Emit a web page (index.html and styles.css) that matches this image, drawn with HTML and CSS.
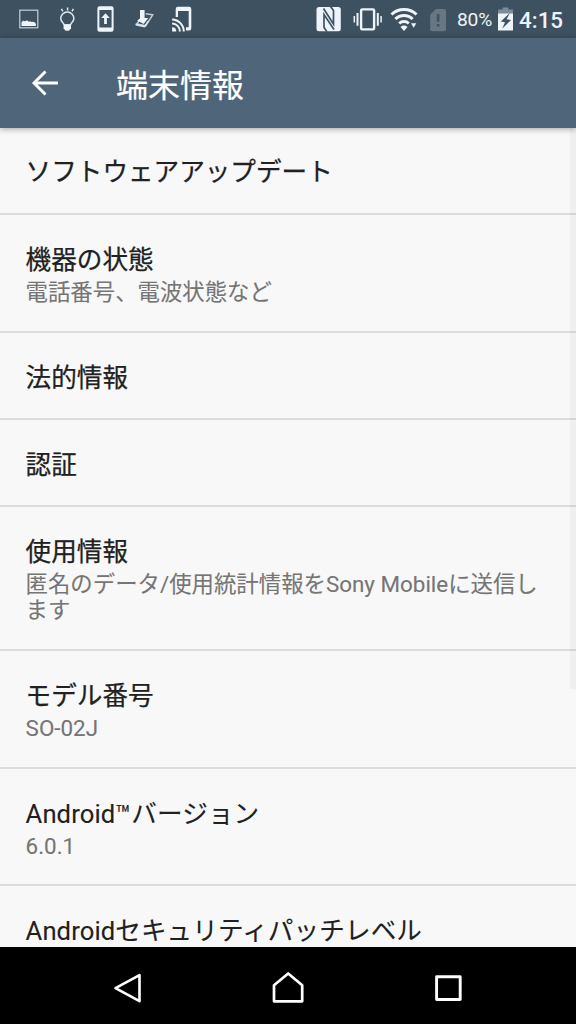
FILE: index.html
```html
<!DOCTYPE html>
<html lang="ja">
<head>
<meta charset="utf-8">
<title>端末情報</title>
<link rel="stylesheet" href="styles.css">
</head>
<body>
<div class="screen">
  <header class="status">
    <div class="notifications">
      <svg class="note" viewBox="0 0 38 38"><rect x="9.6" y="10.2" width="18" height="17.6" fill="none" stroke="#c5d0d8" stroke-width="1.2"/><path d="M11.300 26v-3.500c1-2.500 3-2 3.500-1 1-1.500 2.700-1.500 3.500.3 1-.8 2-.8 2.800.2 2-.5 4 .3 4.600 2V26z" fill="#edf4fa"/></svg>
      <svg class="note" viewBox="0 0 38 38"><path d="M15.800 24.800c0-2-3.300-3-3.300-6.200a6.600 6.600 0 0 1 13.200 0c0 3.200-3.300 4.200-3.300 6.200z" fill="none" stroke="#dce7ef" stroke-width="1.5"/><path d="M15.400 25h7.400v3.200l-2 2.500h-3.400l-2-2.500z" fill="#edf4fa"/><path d="M19.400 7.600v3M13.200 8.800l1.400 2.600M25.200 8.800l-1.400 2.600" stroke="#dce7ef" stroke-width="1.5"/></svg>
      <svg class="note" viewBox="0 0 38 38"><rect x="11.200" y="6.200" width="16.200" height="25.600" rx="2.200" fill="#edf4fa"/><path d="M13.200 10h12.200v17.500H13.200z" fill="#405363"/><path d="M19.300 13.200l4.300 4.800h-2.900v6h-2.800v-6H15z" fill="#edf4fa"/></svg>
      <svg class="note" viewBox="0 0 38 38"><path d="M20.500 13.800l7 1-7 11-9-1.800 4-5" fill="none" stroke="#c5d0d8" stroke-width="1.500"/><path d="M14.800 10h4.600v8h3.600l-4.500 6-6.500-3.500 2.800-2z" fill="#edf4fa"/><path d="M10.300 23.500l9 1.800 4-5.500v2.500L19.500 27.500l-9-2z" fill="#dce7ef"/></svg>
      <svg class="note" viewBox="0 0 38 38"><path d="M12.500 17V9a2.200 2.200 0 0 1 2.200-2.200h11.200A2.200 2.200 0 0 1 28.100 9v19.200a2.200 2.200 0 0 1-2.200 2.200H22.800v-3.200h2.700V11H14.800v6z" fill="#edf4fa"/><path d="M8.900 19.500a12 12 0 0 1 11.700 12M8.900 23.400a8 8 0 0 1 7.800 8.100" fill="none" stroke="#edf4fa" stroke-width="2"/><path d="M8.900 27.200a4.300 4.300 0 0 1 4.200 4.300H8.900z" fill="#edf4fa"/></svg>
    </div>
    <div class="system">
      <svg class="nfc" viewBox="0 0 26 38"><rect x=".5" y="7" width="24.300" height="24.200" rx="2.500" fill="#edf4fa"/><path d="M10.800 31.500L8 27.500V14.500l10 15M14.500 6.500l3 4v13.500L7.500 8.500" fill="none" stroke="#405363" stroke-width="1.700"/></svg>
      <svg class="vibrate" viewBox="0 0 30 38"><rect x="8.100" y="9.400" width="13" height="20" rx="1.200" fill="none" stroke="#edf4fa" stroke-width="2.400"/><path d="M4.500 13v12.800M24.800 13v12.800" stroke="#edf4fa" stroke-width="2"/><path d="M1.300 16v6.500M28.100 16v6.500" stroke="#edf4fa" stroke-width="1.500"/></svg>
      <svg class="wifi" viewBox="0 0 28 38"><path d="M1.500 14.500a18 18 0 0 1 25 0M5.300 19a12.500 12.500 0 0 1 17.400 0M9.200 23.500a7 7 0 0 1 9.600 0" fill="none" stroke="#edf4fa" stroke-width="3"/><path d="M10.500 27a5 5 0 0 1 7 0L14 31z" fill="#edf4fa"/><path d="M21 23.300h5.300l-2.600 4.500z" fill="#edf4fa"/></svg>
      <svg class="sim" viewBox="0 0 17 38"><path d="M6 9h8a2 2 0 0 1 2 2v18.200a2 2 0 0 1-2 2H2.200a2 2 0 0 1-2-2V14.500z" fill="#687782"/><path d="M6.800 14h2.600v7.800H6.800zM6.800 24h2.600v2.600H6.800z" fill="#405160"/></svg>
      <span class="percent">80%</span>
      <svg class="battery" viewBox="0 0 16 38"><path d="M0 14V9.500h4.600V7.600h5.800v1.900H15V14z" fill="#7e8c97"/><path d="M0 13.500h15v17H0z" fill="#edf4fa"/><path d="M12 12.800L2.800 21.600l4.200.7-2.800 6.500 8.800-8.900-4.400-.6z" fill="#405160"/></svg>
      <span class="clock">4:15</span>
    </div>
  </header>
  <div class="toolbar">
    <svg class="back" viewBox="0 0 28 28"><path d="M27 14H3M14.500 2.500L3 14l11.500 11.500" fill="none" stroke="#fff" stroke-width="2.900"/></svg>
    <h1 class="heading">端末情報</h1>
  </div>
  <main class="list">
    <section class="row first"><h2 class="title">ソフトウェアアップデート</h2></section>
    <section class="row double"><h2 class="title">機器の状態</h2><p class="summary">電話番号、電波状態など</p></section>
    <section class="row"><h2 class="title">法的情報</h2></section>
    <section class="row"><h2 class="title">認証</h2></section>
    <section class="row triple"><h2 class="title">使用情報</h2><p class="summary">匿名のデータ/使用統計情報をSony Mobileに送信し<br>ます</p></section>
    <section class="row double"><h2 class="title">モデル番号</h2><p class="summary">SO-02J</p></section>
    <section class="row double"><h2 class="title mixed">Android™バージョン</h2><p class="summary">6.0.1</p></section>
    <section class="row"><h2 class="title mixed">Androidセキュリティパッチレベル</h2></section>
    <div class="scrollbar"></div>
  </main>
  <nav class="nav">
    <svg class="key" viewBox="0 0 40 40"><path d="M31.500 7.200v26L7.500 20.200z" fill="none" stroke="#fff" stroke-width="2.600" stroke-linejoin="round"/></svg>
    <svg class="key" viewBox="0 0 40 40"><path d="M6 33.300V17.300L20.200 5.500l14 11.800v16z" fill="none" stroke="#fff" stroke-width="2.700" stroke-linejoin="round"/></svg>
    <svg class="key" viewBox="0 0 40 40"><rect x="8.600" y="8.700" width="23.600" height="22.800" fill="none" stroke="#fff" stroke-width="2.900" stroke-linejoin="round"/></svg>
  </nav>
</div>
</body>
</html>
```
FILE: styles.css
```css
* { box-sizing: border-box; }
body {
  margin: 0;
  font-family: Roboto, "Noto Sans CJK JP", sans-serif;
}
.screen {
  width: 576px;
  height: 1024px;
  display: flex;
  flex-direction: column;
  overflow: hidden;
  background: #f8f8f8;
}
.status {
  flex: 0 0 38px;
  display: flex;
  justify-content: space-between;
  padding: 0 13px 0 9.6px;
  background: #3e5160;
  color: #edf4fa;
}
.notifications, .system { display: flex; align-items: center; height: 38px; }
.note { width: 38.4px; height: 38px; }
.system svg { height: 38px; flex: none; }
.nfc { width: 26px; margin-right: 11px; }
.vibrate { width: 30px; margin-right: 7px; }
.wifi { width: 28px; margin-right: 12px; }
.sim { width: 17px; margin-right: 10px; }
.percent {
  width: 37px;
  padding-top: 2px;
  font-size: 19.2px;
  line-height: 36px;
  letter-spacing: -.2px;
  white-space: nowrap;
}
.battery { width: 16px; margin: 0 5px 0 4px; }
.clock {
  width: 44px;
  padding-top: 2px;
  font-size: 22.4px;
  font-weight: 500;
  line-height: 36px;
  white-space: nowrap;
}
.toolbar {
  flex: 0 0 90px;
  display: flex;
  align-items: center;
  padding-left: 31px;
  background: #4e657a;
  box-shadow: 0 1px 6px rgba(0, 0, 0, .35);
  z-index: 1;
}
.back { width: 28px; height: 28px; }
.heading {
  margin: 0 0 0 57px;
  padding-top: 5px;
  color: #fff;
  font-size: 32px;
  font-weight: 400;
  line-height: 44px;
  -webkit-text-stroke: .2px;
}
.list {
  position: relative;
  flex: 0 0 819px;
  overflow: hidden;
}
.row {
  height: 87.2px;
  padding: 28.8px 25.6px 0;
  border-bottom: 2px solid #dcdcdc;
}
.first { height: 87.2px; padding-top: 28.4px; }
.double { height: 117.6px; }
.triple { height: 144px; }
.title {
  margin: 0;
  color: #212121;
  font-size: 25.6px;
  font-weight: 400;
  line-height: 33px;
  white-space: nowrap;
  -webkit-text-stroke: .25px;
}
.mixed { letter-spacing: .1px; -webkit-text-stroke: .1px; }
.summary {
  margin: 2px 0 0;
  color: #757575;
  font-size: 22.4px;
  line-height: 26.4px;
  white-space: nowrap;
  -webkit-text-stroke: .1px;
}
.scrollbar {
  position: absolute;
  top: 0;
  right: 0;
  width: 6.4px;
  height: 561px;
  background: rgba(0, 0, 0, .035);
}
.nav {
  flex: 1;
  display: flex;
  justify-content: center;
  align-items: center;
  gap: 120px;
  padding-top: 5px;
  background: #000;
}
.key { width: 40px; height: 40px; }
```
